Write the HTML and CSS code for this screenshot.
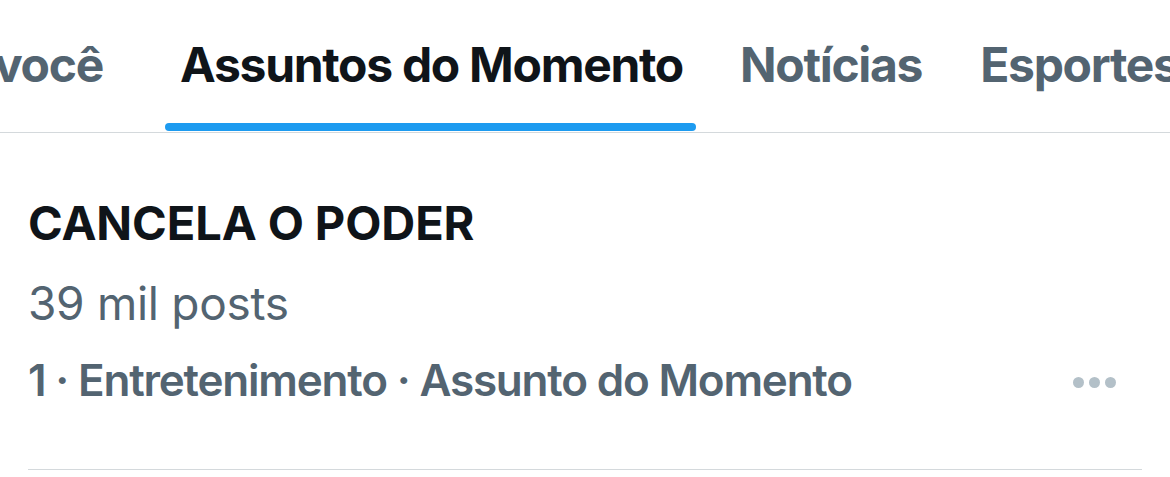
FILE: index.html
```html
<!DOCTYPE html>
<html lang="pt">
<head>
<meta charset="utf-8">
<link rel="stylesheet" href="styles.css">
</head>
<body>
<div class="page">
  <nav class="tabs">
    <div class="tab tab-first"><span class="tab-label">Para você</span></div>
    <div class="tab tab-active"><span class="tab-label">Assuntos do Momento</span><span class="tab-indicator"></span></div>
    <div class="tab tab-news"><span class="tab-label">Notícias</span></div>
    <div class="tab"><span class="tab-label">Esportes</span></div>
  </nav>
  <section class="trend">
    <div class="trend-body">
      <div class="trend-title">CANCELA O PODER</div>
      <div class="trend-count">39 mil posts</div>
      <div class="trend-meta-row">
        <div class="trend-meta">1 · Entretenimento · Assunto do Momento</div>
        <div class="trend-more"><span></span><span></span><span></span></div>
      </div>
    </div>
    <div class="trend-divider"></div>
  </section>
</div>
</body>
</html>
```
FILE: styles.css
```css
* { box-sizing: border-box; }
html, body { margin: 0; padding: 0; background: #ffffff; }
body {
  font-family: Inter, "Noto Sans", "Liberation Sans", sans-serif;
  width: 1170px;
  height: 477px;
  overflow: hidden;
}
.page { width: 1170px; }
.tabs {
  display: flex;
  align-items: stretch;
  height: 133px;
  border-bottom: 1px solid #d4d9dc;
  overflow: hidden;
  white-space: nowrap;
}
.tab {
  position: relative;
  flex: none;
  padding: 36px 0 0;
  font-size: 48px;
  font-weight: 700;
  line-height: 58px;
  color: #536471;
  letter-spacing: -1.3px;
}
.tab-first { margin-left: -116px; margin-right: 77px; }
.tab-active { color: #0f1419; margin-right: 57px; }
.tab-news { margin-right: 58px; }
.tab-indicator {
  position: absolute;
  left: -15px;
  right: -13px;
  bottom: 1px;
  height: 8px;
  border-radius: 4px;
  background: #1d9bf0;
}
.trend { padding: 0 28px; }
.trend-body { padding-top: 62px; }
.trend-title {
  font-size: 47px;
  font-weight: 700;
  line-height: 56px;
  color: #0f1419;
  letter-spacing: -0.1px;
}
.trend-count {
  margin-top: 24px;
  font-size: 46px;
  font-weight: 400;
  line-height: 56px;
  color: #536471;
  letter-spacing: -0.3px;
}
.trend-meta-row {
  display: flex;
  align-items: center;
  justify-content: space-between;
  margin-top: 23px;
}
.trend-meta {
  font-size: 44px;
  font-weight: 600;
  line-height: 52px;
  color: #536471;
  letter-spacing: -1.2px;
}
.trend-more {
  display: flex;
  gap: 5px;
  margin-top: 5px;
  margin-right: 26px;
}
.trend-more span {
  width: 11px;
  height: 11px;
  border-radius: 50%;
  background: #b3c0c8;
}
.trend-divider {
  margin-top: 63px;
  height: 1px;
  background: #d4d9dc;
}
```
